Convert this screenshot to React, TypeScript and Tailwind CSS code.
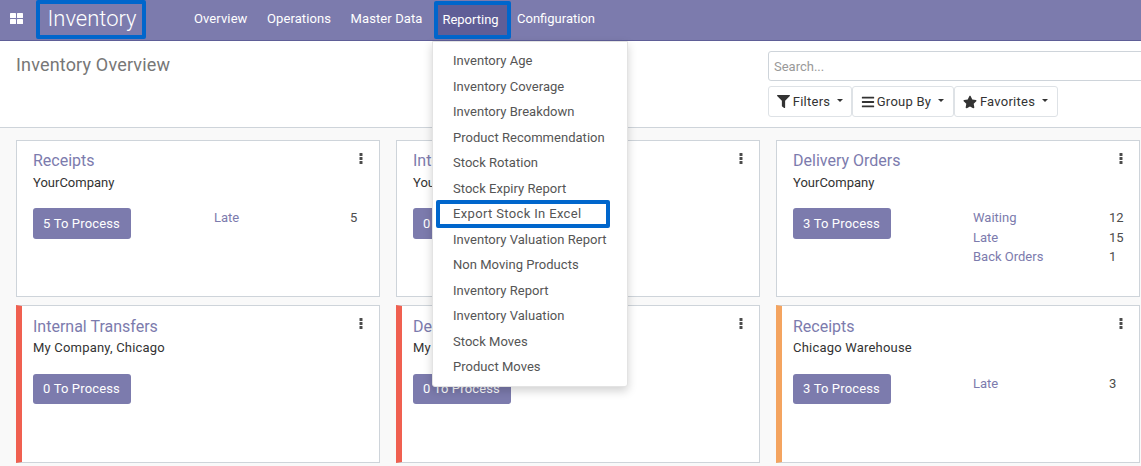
import { FaFilter, FaBars, FaStar } from "react-icons/fa";

const nav = ["Overview", "Operations", "Master Data"];
const menu = [
  "Inventory Age",
  "Inventory Coverage",
  "Inventory Breakdown",
  "Product Recommendation",
  "Stock Rotation",
  "Stock Expiry Report",
  "Export Stock In Excel",
  "Inventory Valuation Report",
  "Non Moving Products",
  "Inventory Report",
  "Inventory Valuation",
  "Stock Moves",
  "Product Moves",
];

type Card = {
  title: string;
  company: string;
  count: number;
  stats: [string, number][];
  bar?: "red" | "orange";
  third?: boolean;
};

const cards: Card[] = [
  { title: "Receipts", company: "YourCompany", count: 5, stats: [["Late", 5]] },
  { title: "Internal Transfers", company: "YourCompany", count: 0, stats: [] },
  {
    title: "Delivery Orders",
    company: "YourCompany",
    count: 3,
    third: true,
    stats: [
      ["Waiting", 12],
      ["Late", 15],
      ["Back Orders", 1],
    ],
  },
  { title: "Internal Transfers", company: "My Company, Chicago", count: 0, stats: [], bar: "red" },
  { title: "Delivery Orders", company: "My Company, Chicago", count: 0, stats: [], bar: "red" },
  { title: "Receipts", company: "Chicago Warehouse", count: 3, stats: [["Late", 3]], bar: "orange", third: true },
];

function Kebab() {
  return (
    <svg width="4" height="11" viewBox="0 0 4 11" className="absolute right-[16px] top-[12px] text-[#4c4c4c]" fill="currentColor">
      <rect x="0.5" y="0" width="3" height="3" rx="0.6" />
      <rect x="0.5" y="4" width="3" height="3" rx="0.6" />
      <rect x="0.5" y="8" width="3" height="3" rx="0.6" />
    </svg>
  );
}

function Caret() {
  return <span className="ml-[7px] mb-[3px] inline-block h-0 w-0 border-x-[3.5px] border-t-[3.5px] border-x-transparent border-t-[#333]" />;
}

function KanbanCard({ card }: { card: Card }) {
  return (
    <div
      className={
        "relative flex border border-[#ced4da] bg-white pt-[10px] " +
        (card.bar ? "h-[158px] pl-[11px] " : "h-[157px] pl-[16px] ") +
        (card.bar === "red" ? "border-l-[6px] border-l-[#f06050]" : card.bar === "orange" ? "border-l-[6px] border-l-[#f4a460]" : "")
      }
    >
      <Kebab />
      <div className="w-full">
        <div className={"text-[16px] leading-[19px] text-[#7c7bad] " + (card.bar ? "mt-[1px]" : "")}>{card.title}</div>
        <div className={"text-[13px] leading-[19px] text-[#333] " + (card.bar ? "mt-[2px] tracking-[0.2px]" : "mt-[3px]")}>{card.company}</div>
        <div className={"flex " + (card.bar ? "mt-[17px]" : "mt-[16px]")}>
          <div className={"flex w-[98px] items-center justify-center rounded-[3px] bg-[#7c7bad] pr-[1px] text-[13px] tracking-[0.15px] text-white " + (card.bar ? "h-[30px]" : "h-[31px]")}>
            {card.count} To Process
          </div>
          <div className={"flex-1 " + (card.third ? "ml-[82px]" : "ml-[83px]")}>
            {card.stats.map(([label, value]) => (
              <div key={label} className="flex h-[19.5px] items-center text-[13px]">
                <span className="w-[136px] text-[#7c7bad]">{label}</span>
                <span className="text-[#4c4c4c]">{value}</span>
              </div>
            ))}
          </div>
        </div>
      </div>
    </div>
  );
}

export default function App() {
  return (
    <div className="relative h-[466px] w-[1141px] overflow-hidden bg-[#f9f9f9] font-['Roboto',sans-serif] text-[13px]">
      {/* Navbar */}
      <div className="flex h-[41px] items-start border-b border-[#5f5e97] bg-[#7c7bad] text-white">
        <svg width="13" height="11" viewBox="0 0 13 11" fill="white" className="ml-[10px] mt-[13px]">
          <rect x="0" y="0" width="6" height="5" rx="0.6" />
          <rect x="7" y="0" width="6" height="5" rx="0.6" />
          <rect x="0" y="6" width="6" height="5" rx="0.6" />
          <rect x="7" y="6" width="6" height="5" rx="0.6" />
        </svg>
        <div className="ml-[13px] flex h-[39px] w-[110px] items-center justify-center rounded-[2px] border-[4px] border-[#0066cc] pb-[3px] pl-[2px] text-[22px] font-light">
          Inventory
        </div>
        <div className="ml-[48px] flex h-[38px] items-center gap-[19.5px] tracking-[0.1px]">
          {nav.map((n) => (
            <span key={n}>{n}</span>
          ))}
        </div>
        <div className="ml-[11.5px] mt-[1px] flex h-[38px] w-[77px] items-center justify-center rounded-[2px] border-[4px] border-[#0066cc] bg-[#5f5e97] pr-[4px]">
          Reporting
        </div>
        <span className="ml-[6px] mt-[9px] leading-[20px]">Configuration</span>
      </div>

      {/* Control panel */}
      <div className="flex h-[87px] border-b border-[#ced4da] bg-white">
        <div className="ml-[16px] mt-[13px] w-[752px] shrink-0 text-[18px] leading-[22px] tracking-[0.17px] text-[#777]">Inventory Overview</div>
        <div className="mt-[10px] w-[400px] shrink-0">
          <div className="h-[30px] rounded-l-[3px] border border-[#ced4da] pl-[5px] text-[13px] leading-[30px] text-[#999]">Search...</div>
          <div className="mt-[5px] flex h-[31px] tracking-[0.25px] text-[#333]">
            <div className="flex w-[84px] items-center justify-center rounded-[3px] border border-[#dee2e6]">
              <FaFilter size={13} className="mr-[3px]" />
              Filters
              <Caret />
            </div>
            <div className="flex w-[102px] items-center justify-center rounded-[3px] border border-[#dee2e6] pr-[1px]">
              <FaBars size={14} className="mr-[2px]" />
              Group By
              <Caret />
            </div>
            <div className="flex w-[104px] items-center justify-center rounded-[3px] border border-[#dee2e6] pr-[1px]">
              <FaStar size={14} className="mr-[3px]" />
              Favorites
              <Caret />
            </div>
          </div>
        </div>
      </div>

      {/* Kanban */}
      <div className="grid grid-cols-[364px_364px_364px] gap-x-[16px] gap-y-[8px] pl-[16px] pt-[12px]">
        {cards.map((c, i) => (
          <KanbanCard key={i} card={c} />
        ))}
      </div>

      {/* Dropdown */}
      <div className="absolute left-[432px] top-[41px] h-[346px] w-[196px] rounded-b-[3px] border border-[#e3e3e3] bg-white pt-[6px] text-[13px] text-[#555] shadow-[0_4px_10px_rgba(0,0,0,0.18)]">
        {menu.map((m) =>
          m === "Export Stock In Excel" ? (
            <div key={m} className="my-[-1.25px] ml-[3px] flex h-[28px] w-[174px] items-center rounded-[2px] border-[4px] border-[#0066cc] pl-[13px] tracking-[0.35px]">
              {m}
            </div>
          ) : (
            <div key={m} className="flex h-[25.5px] items-center pl-[20px] tracking-[0.03px]">
              {m}
            </div>
          )
        )}
      </div>
    </div>
  );
}
